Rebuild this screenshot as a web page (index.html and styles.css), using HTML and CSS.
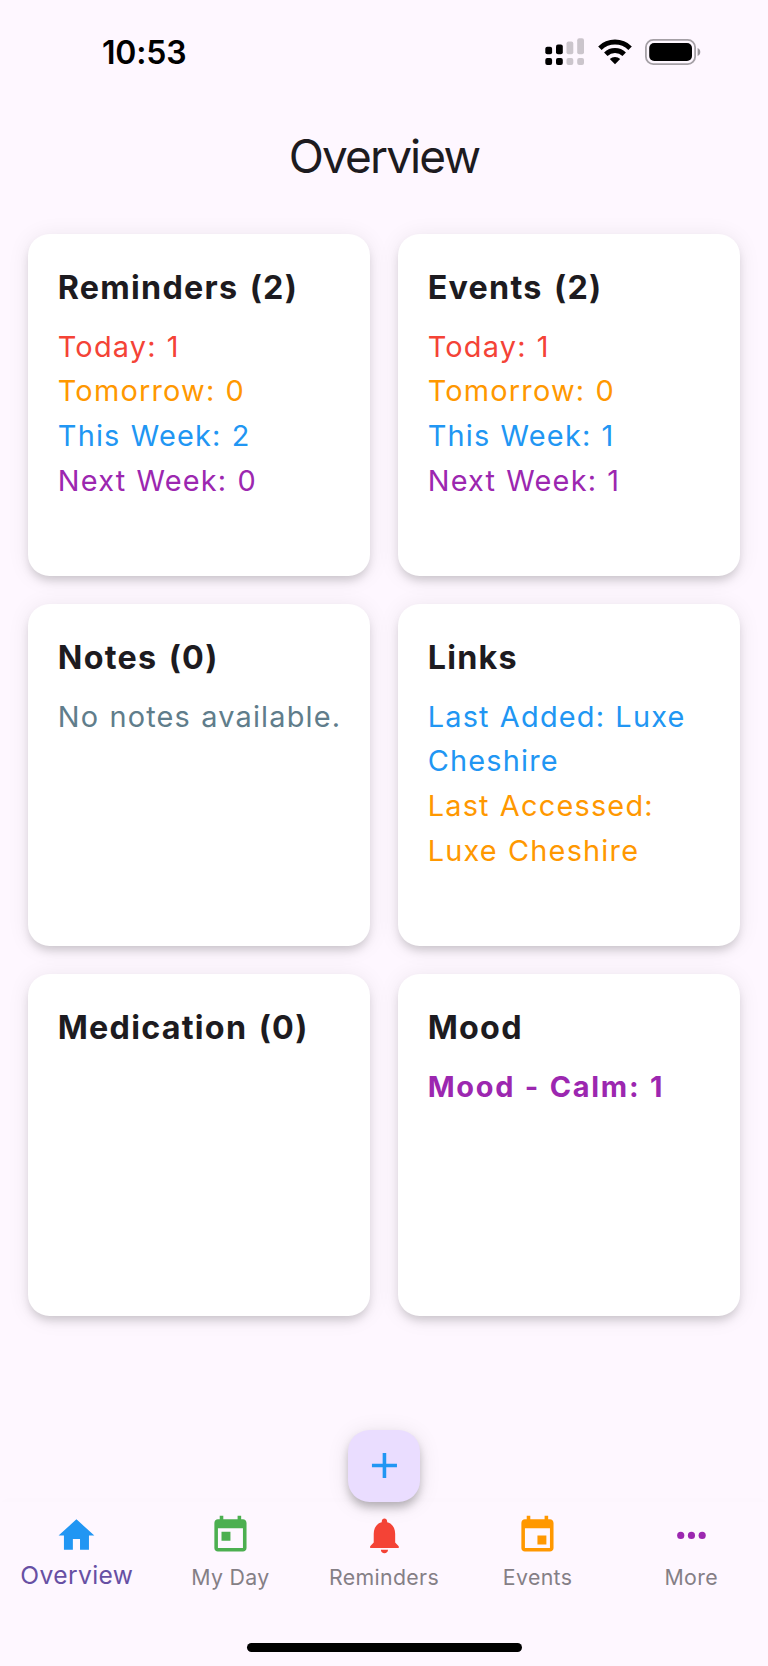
FILE: index.html
```
<!DOCTYPE html>
<html lang="en">
<head>
  <meta charset="UTF-8" />
  <title>Overview</title>
  <link rel="stylesheet" href="styles.css">
</head>
<body>
  <div class="app">
    <div class="status-bar">
      <span class="time">10:53</span>
      <div class="status-icons">
        <svg class="signal" width="40" height="28" viewBox="0 0 40 28">
          <rect x="0.3" y="8.7" width="6.8" height="7.6" rx="2" />
          <rect x="11" y="6.5" width="6.8" height="9.8" rx="2" />
          <rect class="dim" x="21.5" y="3.4" width="6.8" height="12.9" rx="2" />
          <rect class="dim" x="32.2" y="0.3" width="6.8" height="16" rx="2" />
          <rect x="0.3" y="20" width="6.8" height="7" rx="2" />
          <rect x="11" y="20" width="6.8" height="7" rx="2" />
          <rect class="dim" x="21.5" y="20" width="6.8" height="7" rx="2" />
          <rect class="dim" x="32.2" y="20" width="6.8" height="7" rx="2" />
        </svg>
        <svg class="wifi" width="34" height="26" viewBox="0 0 34 26">
          <path d="M1.9 9.2a21.8 21.8 0 0 1 30.2 0" />
          <path d="M7.8 15.2a13.4 13.4 0 0 1 18.4 0" />
          <path class="dot" d="M17 25.2l-5.2-5.1a7.6 7.6 0 0 1 10.4 0z" />
        </svg>
        <svg class="battery" width="56" height="26" viewBox="0 0 56 26">
          <rect class="shell" x="0.9" y="0.9" width="49.2" height="24.2" rx="7.4" />
          <rect x="4.2" y="4" width="42.8" height="18" rx="5" />
          <path class="cap" d="M52.6 9c1.7.7 2.7 2.2 2.7 4s-1 3.3-2.7 4z" />
        </svg>
      </div>
    </div>

    <h1>Overview</h1>

    <div class="cards">
      <div class="card">
        <h2>Reminders (2)</h2>
        <div class="red">Today: 1</div>
        <div class="orange">Tomorrow: 0</div>
        <div class="blue">This Week: 2</div>
        <div class="purple">Next Week: 0</div>
      </div>
      <div class="card">
        <h2>Events (2)</h2>
        <div class="red">Today: 1</div>
        <div class="orange">Tomorrow: 0</div>
        <div class="blue">This Week: 1</div>
        <div class="purple">Next Week: 1</div>
      </div>
      <div class="card">
        <h2>Notes (0)</h2>
        <div class="grey">No notes available.</div>
      </div>
      <div class="card">
        <h2>Links</h2>
        <div class="blue">Last Added: Luxe Cheshire</div>
        <div class="orange">Last Accessed: Luxe Cheshire</div>
      </div>
      <div class="card">
        <h2>Medication (0)</h2>
      </div>
      <div class="card">
        <h2>Mood</h2>
        <div class="purple strong">Mood - Calm: 1</div>
      </div>
    </div>

    <div class="bottom">
      <button class="fab" aria-label="Add">
        <svg class="icon blue" viewBox="0 0 24 24"><path d="M19 13h-6v6h-2v-6H5v-2h6V5h2v6h6v2z" /></svg>
      </button>
      <nav class="nav">
        <a class="nav-item active">
          <svg class="icon blue" viewBox="0 0 24 24"><path d="M10 20v-6h4v6h5v-8h3L12 3 2 12h3v8z" /></svg>
          <span>Overview</span>
        </a>
        <a class="nav-item">
          <svg class="icon green" viewBox="0 0 24 24"><path d="M19 3h-1V1h-2v2H8V1H6v2H5c-1.11 0-1.99.9-1.99 2L3 19c0 1.1.89 2 2 2h14c1.1 0 2-.9 2-2V5c0-1.1-.9-2-2-2zm0 16H5V8h14v11zM7 10h5v5H7z" /></svg>
          <span>My Day</span>
        </a>
        <a class="nav-item">
          <svg class="icon red" viewBox="0 0 24 24"><path d="M12 22c1.1 0 2-.9 2-2h-4c0 1.1.89 2 2 2zm6-6v-5c0-3.07-1.64-5.64-4.5-6.32V4c0-.83-.67-1.5-1.5-1.5s-1.5.67-1.5 1.5v.68C7.63 5.36 6 7.92 6 11v5l-2 2v1h16v-1l-2-2z" /></svg>
          <span>Reminders</span>
        </a>
        <a class="nav-item">
          <svg class="icon orange" viewBox="0 0 24 24"><path d="M17 12h-5v5h5v-5zM16 1v2H8V1H6v2H5c-1.11 0-1.99.9-1.99 2L3 19c0 1.1.89 2 2 2h14c1.1 0 2-.9 2-2V5c0-1.1-.9-2-2-2h-1V1h-2zm3 18H5V8h14v11z" /></svg>
          <span>Events</span>
        </a>
        <a class="nav-item">
          <svg class="icon purple" viewBox="0 0 24 24"><circle cx="6" cy="12" r="2" /><circle cx="12" cy="12" r="2" /><circle cx="18" cy="12" r="2" /></svg>
          <span>More</span>
        </a>
      </nav>
      <div class="home-indicator"></div>
    </div>
  </div>
</body>
</html>
```
FILE: styles.css
```
* {
  box-sizing: border-box;
}
body {
  margin: 0;
  background: #fef7ff;
  color: #1d1b20;
  font-family: Inter, "Liberation Sans", sans-serif;
}
.app {
  width: 768px;
  height: 1666px;
  display: flex;
  flex-direction: column;
  overflow: hidden;
}

/* Status bar */
.status-bar {
  height: 103px;
  padding: 0 67.5px 0 102px;
  display: flex;
  align-items: center;
  justify-content: space-between;
  color: #000;
}
.time {
  padding-top: 2px;
  font-size: 32px;
  font-weight: 600;
  letter-spacing: -0.2px;
}
.status-icons {
  display: flex;
  align-items: center;
  gap: 13px;
}
.dim {
  fill: #cbc5cc;
}
.wifi path {
  fill: none;
  stroke: #000;
  stroke-width: 5;
}
.wifi .dot {
  fill: #000;
  stroke: none;
}
.battery .shell {
  fill: none;
  stroke: #a5a0a6;
  stroke-width: 1.8;
}
.battery .cap {
  fill: #98949a;
}

h1 {
  margin: 0;
  height: 105px;
  line-height: 106px;
  text-align: center;
  font-size: 46px;
  font-weight: 400;
  letter-spacing: -1.9px;
}

/* Cards */
.cards {
  display: grid;
  grid-template-columns: 1fr 1fr;
  grid-auto-rows: 341.4px;
  gap: 28.6px;
  padding: 26.2px 28.4px 0;
}
.card {
  padding: 29.4px 24px 28.6px 29.4px;
  background: #fff;
  border-radius: 21.5px;
  box-shadow: 0 6px 10px -2px rgba(0, 0, 0, 0.17), 0 2px 22px rgba(0, 0, 0, 0.08);
  font-size: 28.9px;
  line-height: 44.65px;
  letter-spacing: 1.2px;
  word-spacing: 0.8px;
}
.card h2 {
  margin: 0 0 12.6px;
  font-size: 32.3px;
  line-height: 48.6px;
  font-weight: 700;
  letter-spacing: 1.25px;
  word-spacing: 2.5px;
}
.card .strong {
  font-weight: 700;
  letter-spacing: 1.7px;
  word-spacing: 1.2px;
}

.red { color: #f44336; }
.orange { color: #ff9800; }
.blue { color: #2196f3; }
.purple { color: #9c27b0; }
.green { color: #4caf50; }
.grey { color: #607d8b; }

/* Bottom navigation */
.bottom {
  margin-top: auto;
  height: 236px;
  display: flex;
  flex-direction: column;
  align-items: center;
}
.fab {
  width: 72px;
  height: 71.5px;
  flex: none;
  display: flex;
  align-items: center;
  justify-content: center;
  padding: 0;
  border: none;
  border-radius: 21.5px;
  background: #eaddff;
  box-shadow: 0 6px 10px -1px rgba(0, 0, 0, 0.25), 0 3px 22px rgba(0, 0, 0, 0.1);
  z-index: 1;
}
.icon {
  width: 42.9px;
  height: 42.9px;
  fill: currentColor;
}
.nav {
  width: 100%;
  height: 141px;
  padding-top: 12.5px;
  display: flex;
  box-shadow: 0 -4px 8px -2px rgba(0, 0, 0, 0.012);
}
.nav-item {
  flex: 1;
  display: flex;
  flex-direction: column;
  align-items: center;
  color: #857f86;
  font-size: 21.3px;
  line-height: 30px;
  letter-spacing: 0.35px;
}
.nav-item span {
  margin-top: 5.5px;
}
.nav-item.active {
  color: #6750a4;
  font-size: 24.6px;
  letter-spacing: 0.4px;
}
.nav-item.active span {
  margin-top: 3px;
}
.home-indicator {
  width: 275px;
  height: 9.5px;
  border-radius: 5px;
  background: #000;
}
```
